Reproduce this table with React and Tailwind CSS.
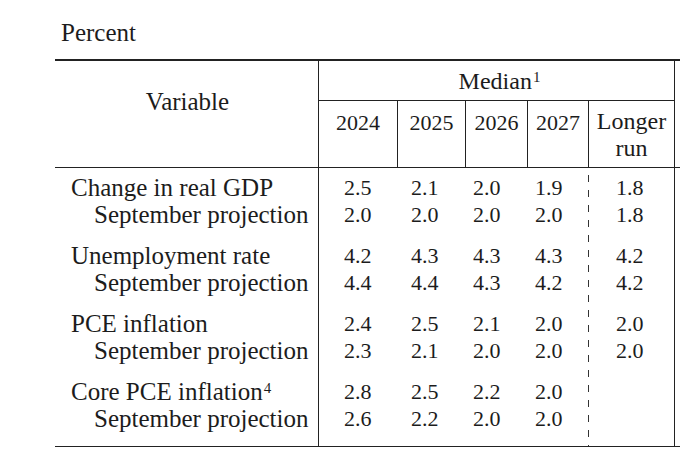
import React from "react";

const groups = [
  {
    label: "Change in real GDP",
    values: ["2.5", "2.1", "2.0", "1.9", "1.8"],
    sept: ["2.0", "2.0", "2.0", "2.0", "1.8"],
  },
  {
    label: "Unemployment rate",
    values: ["4.2", "4.3", "4.3", "4.3", "4.2"],
    sept: ["4.4", "4.4", "4.3", "4.2", "4.2"],
  },
  {
    label: "PCE inflation",
    values: ["2.4", "2.5", "2.1", "2.0", "2.0"],
    sept: ["2.3", "2.1", "2.0", "2.0", "2.0"],
  },
  {
    label: "Core PCE inflation",
    sup: "4",
    values: ["2.8", "2.5", "2.2", "2.0", ""],
    sept: ["2.6", "2.2", "2.0", "2.0", ""],
  },
];

// column widths and left padding of the numbers in each column
const cols = [
  { w: "w-[79px]", pad: "pl-[25px]" },
  { w: "w-[68px]", pad: "pl-[13px]" },
  { w: "w-[62px]", pad: "pl-[7px]" },
  { w: "w-[61px]", pad: "pl-[7px]" },
];

const Cell = ({ children, className = "" }) => (
  <div className={`h-[27px] flex items-center ${className}`}>{children}</div>
);

const NumberColumn = ({ index, pad }) => (
  <div className={`flex flex-col gap-[14px] pt-[6px] pb-[14px] text-[22px] ${pad}`}>
    {groups.map((g) => (
      <div key={g.label}>
        <Cell>{g.values[index]}</Cell>
        <Cell>{g.sept[index]}</Cell>
      </div>
    ))}
  </div>
);

export default function App() {
  return (
    <div
      className="w-[680px] h-[453px] overflow-hidden bg-white text-[#1c1c1c] text-[25px] leading-none"
      style={{ fontFamily: '"Liberation Serif", serif' }}
    >
      <div className="pl-[61px] pt-[20px] h-[59px]">Percent</div>

      <div className="ml-[55px] w-[660px]">
        {/* header */}
        <div className="flex border-t-2 border-b border-[#222] h-[109px]">
          <div className="w-[264px] border-r border-[#222] flex items-center justify-center pb-[26px] pl-[2px]">
            Variable
          </div>
          <div className="w-[356px] border-r border-[#222] flex flex-col">
            <div className="h-[40px] border-b border-[#222] flex items-center justify-center pl-[6px] text-[24px]">
              <span>
                Median<sup className="text-[15px] -top-[7px] ml-[1px]">1</sup>
              </span>
            </div>
            <div className="flex flex-1">
              {["2024", "2025", "2026", "2027"].map((y, i) => (
                <div
                  key={y}
                  className={`${cols[i].w} border-r border-[#222] flex justify-center pt-[11px] text-[22px]`}
                >
                  {y}
                </div>
              ))}
              <div className="flex-1 flex flex-col items-center pt-[7px] leading-[27px] text-[24px]">
                <span>Longer</span>
                <span>run</span>
              </div>
            </div>
          </div>
        </div>

        {/* body */}
        <div className="flex border-b border-[#222]">
          <div className="w-[264px] border-r border-[#222] flex flex-col gap-[14px] pt-[6px] pb-[14px] pl-[16px]">
            {groups.map((g) => (
              <div key={g.label}>
                <Cell>
                  <span>
                    {g.label}
                    {g.sup && <sup className="text-[15px] -top-[7px] ml-[1px]">{g.sup}</sup>}
                  </span>
                </Cell>
                <Cell className="pl-[23px]">September projection</Cell>
              </div>
            ))}
          </div>
          <div className="w-[356px] border-r border-[#222] flex">
            {cols.map((c, i) => (
              <div key={i} className={`${c.w} shrink-0`}>
                <NumberColumn index={i} pad={c.pad} />
              </div>
            ))}
            <div className="w-px shrink-0 -ml-px bg-[repeating-linear-gradient(to_bottom,transparent_0_7px,#333_7px_14px,transparent_14px_15px)]" />
            <div className="flex-1">
              <NumberColumn index={4} pad="pl-[27px]" />
            </div>
          </div>
        </div>

        <div className="pl-[16px] pt-[5px]">Memo: Projected appropriate policy path</div>
      </div>
    </div>
  );
}
